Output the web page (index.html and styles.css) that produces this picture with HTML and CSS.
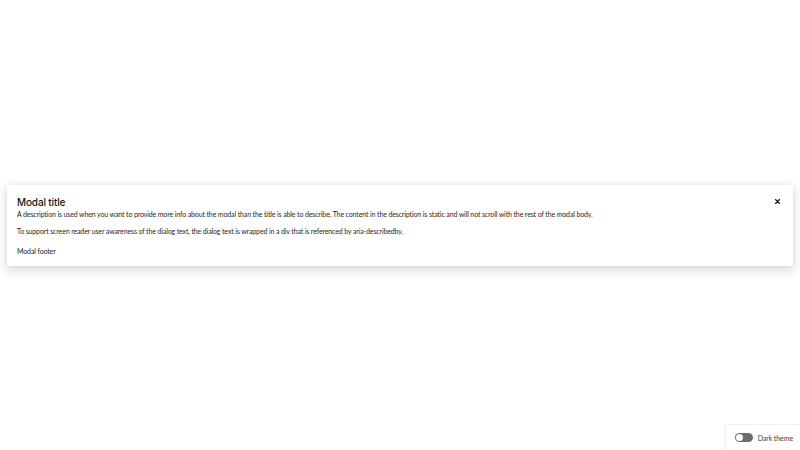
FILE: index.html
```html
<!DOCTYPE html>
<html>
<head>
<meta charset="utf-8">
<link rel="stylesheet" href="styles.css">
</head>
<body>
<div class="backdrop">
  <div class="modal" role="dialog" aria-describedby="modal-desc">
    <header class="modal-header">
      <h1 class="modal-title">Modal title</h1>
      <button class="close" aria-label="Close">
        <svg viewBox="0 0 10 10" width="5" height="5"><path d="M1 1 L9 9 M9 1 L1 9" stroke="#151515" stroke-width="2.2" stroke-linecap="round"/></svg>
      </button>
    </header>
    <p class="modal-description">A description is used when you want to provide more info about the modal than the title is able to describe. The content in the description is static and will not scroll with the rest of the modal body.</p>
    <div class="modal-body" id="modal-desc">To support screen reader user awareness of the dialog text, the dialog text is wrapped in a div that is referenced by aria-describedby.</div>
    <footer class="modal-footer">Modal footer</footer>
  </div>
</div>
<div class="theme-switch">
  <span class="toggle"><span class="knob"></span></span>
  <span class="label">Dark theme</span>
</div>
</body>
</html>
```
FILE: styles.css
```css
html, body {
  margin: 0;
  padding: 0;
  width: 800px;
  height: 450px;
  background: #fff;
  font-family: "Lato", "Open Sans", sans-serif;
  color: #151515;
  overflow: hidden;
}
.backdrop {
  height: 450px;
  display: flex;
  align-items: center;
  justify-content: center;
}
.modal {
  width: 786px;
  box-sizing: border-box;
  background: #fff;
  padding: 11px 10px 10px 10px;
  box-shadow: 0 4px 12px rgba(3, 3, 3, 0.16), 0 0 4px rgba(3, 3, 3, 0.07);
}
.modal-header {
  display: flex;
  align-items: center;
  justify-content: space-between;
  height: 12px;
}
.modal-title {
  margin: 0;
  font-family: "Inter", "Open Sans", sans-serif;
  font-weight: 500;
  font-size: 10px;
  line-height: 12px;
  letter-spacing: -0.15px;
  color: #151515;
}
.close {
  border: 0;
  background: none;
  padding: 0;
  margin-right: 1px;
  width: 10px;
  height: 10px;
  display: flex;
  align-items: center;
  justify-content: center;
}
.modal-description,
.modal-body,
.modal-footer {
  font-size: 7px;
  line-height: 10px;
  letter-spacing: -0.13px;
  color: #1f1f1f;
}
.modal-description {
  margin: 1px 0 0;
}
.modal-body {
  margin-top: 7px;
}
.modal-footer {
  margin-top: 10px;
}
.theme-switch {
  position: fixed;
  right: 0;
  bottom: 0;
  display: flex;
  align-items: center;
  gap: 5px;
  padding: 8px 7px 8px 9px;
  background: #fff;
  border-top: 1px solid #f0f0f0;
  border-left: 1px solid #f0f0f0;
  font-size: 7px;
  letter-spacing: -0.08px;
}
.toggle {
  width: 18px;
  height: 9px;
  border-radius: 5px;
  background: #6a6e73;
  position: relative;
}
.knob {
  position: absolute;
  left: 1px;
  top: 1px;
  width: 7px;
  height: 7px;
  border-radius: 50%;
  background: #fff;
}
.label {
  color: #3c3f42;
}
```
